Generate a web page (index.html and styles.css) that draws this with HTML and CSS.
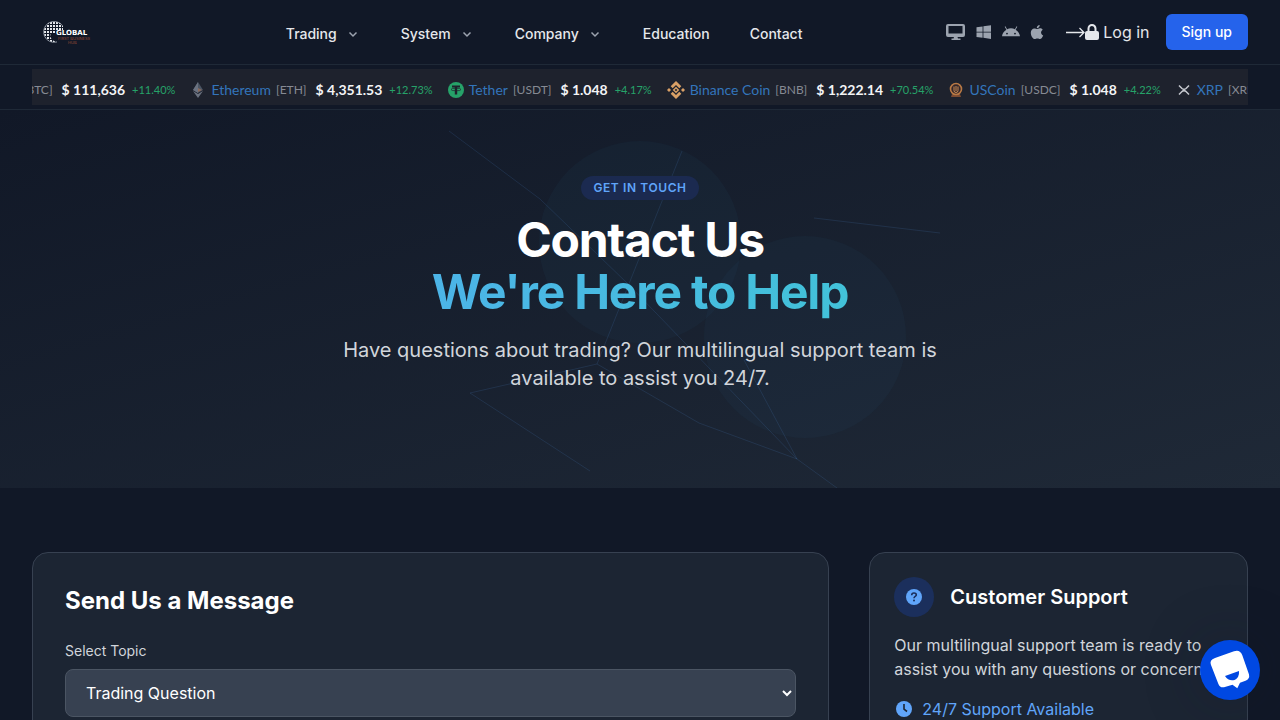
FILE: index.html
```html
<!DOCTYPE html>
<html lang="en">

<head>
    <meta charset="UTF-8">
    <meta name="viewport" content="width=device-width, initial-scale=1">
    <title>Contact Us</title>
    <link rel="stylesheet" href="styles.css">
</head>

<body>
    <header class="header">
        <a href="#" class="logo" aria-label="Global home">
            <svg width="64" height="32" viewBox="0 0 64 32">
                <defs>
                    <pattern id="dots" width="3" height="3" patternUnits="userSpaceOnUse">
                        <rect width="2" height="2" fill="#e5e7eb"/>
                    </pattern>
                </defs>
                <path d="M31 10A10.500 10.500 0 1 0 25 26C19 25 17 20 19 17H24V14H31Z" fill="url(#dots)"/>
                <path d="M30 9A10.500 10.500 0 1 0 25 26" fill="none" stroke="#9ca3af" stroke-width=".8"/>
                <text x="24" y="19" class="logo-name">GLOBAL</text>
                <text x="26" y="24" class="logo-sub">FIRST BUSINESS</text>
                <text x="36" y="28" class="logo-sub">HUB</text>
            </svg>
        </a>

        <nav class="nav">
            <a href="#">Trading <svg class="chevron" viewBox="0 0 16 16"><path d="M4.500 6.500 8 10l3.500-3.500"/></svg></a>
            <a href="#">System <svg class="chevron" viewBox="0 0 16 16"><path d="M4.500 6.500 8 10l3.500-3.500"/></svg></a>
            <a href="#">Company <svg class="chevron" viewBox="0 0 16 16"><path d="M4.500 6.500 8 10l3.500-3.500"/></svg></a>
            <a href="#">Education</a>
            <a href="#">Contact</a>
        </nav>

        <div class="actions">
            <div class="platforms">
                <a href="#" aria-label="Desktop"><svg width="20" height="16" viewBox="0 0 20 16"><path fill-rule="evenodd" d="M2 0h15a2 2 0 0 1 2 2v9a2 2 0 0 1-2 2h-5.500l.5 1.500h2.500V16h-9v-1.500H7.500L8 13H2a2 2 0 0 1-2-2V2a2 2 0 0 1 2-2zm.500 2v7.500h14V2z"/></svg></a>
                <a href="#" aria-label="Windows"><svg width="16" height="16" viewBox="0 0 16 16"><path d="M.5 3.200 6.600 2.400v5.300H.5zM7.400 2.300 15 1.200v6.500H7.400zM.5 8.400h6.100v5.300L.5 12.900zM7.400 8.400H15v6.500l-7.600-1.100z"/></svg></a>
                <a href="#" aria-label="Android"><svg width="18" height="16" viewBox="0 0 18 16"><path fill-rule="evenodd" d="m3.400 2.300 1.700 3A8.500 8.500 0 0 1 9 4.300c1.400 0 2.700.3 3.900 1l1.700-3 .7.400-1.700 3C16 7.200 17.700 9.500 18 12.300H0c.3-2.800 2-5.100 4.400-6.600l-1.700-3zM5 8.700a.9.900 0 1 0 0 1.800.9.900 0 0 0 0-1.800zm8 0a.9.900 0 1 0 0 1.800.9.900 0 0 0 0-1.800z"/></svg></a>
                <a href="#" aria-label="Apple"><svg width="14" height="16" viewBox="0 0 14 16"><path d="M9.700 1c.1 1.600-1.200 3.200-2.900 3.200C6.600 2.600 8.100 1.100 9.700 1zM7 5.100c.7 0 1.600-.8 3-.8 1 0 2 .5 2.700 1.400-2.400 1.500-2 4.700.5 5.700-.8 1.900-1.800 3.600-3.200 3.600-.9 0-1.400-.6-2.600-.6s-1.700.6-2.600.6C2.700 15 .8 11.600.8 8.700c0-2.700 1.700-4.300 3.500-4.300 1.200 0 2 .7 2.700.7z"/></svg></a>
            </div>
            <a href="#" class="login">
                <svg width="19" height="16" viewBox="0 0 19 16"><path d="M0 8.500h18M13.500 4 18 8.500 13.500 13" fill="none" stroke="currentColor" stroke-width="1.300"/></svg>
                <svg width="14" height="16" viewBox="0 0 14 16"><path fill="currentColor" fill-rule="evenodd" d="M2.500 7V4.500a4.500 4.500 0 0 1 9 0V7H12a2 2 0 0 1 2 2v5a2 2 0 0 1-2 2H2a2 2 0 0 1-2-2V9a2 2 0 0 1 2-2zm2 0h5V4.500a2.500 2.500 0 0 0-5 0z"/></svg>
                <span>Log in</span>
            </a>
            <button type="button" class="btn-signup">Sign up</button>
        </div>
    </header>

    <div class="ticker">
        <div class="ticker-window">
            <ul class="ticker-track">
                <li>
                    <a href="#">Bitcoin</a><span class="symbol">[BTC]</span>
                    <span class="price">$ 111,636</span><span class="change">+11.40%</span>
                </li>
                <li>
                    <svg class="coin" viewBox="0 0 16 16"><path fill="#4b5563" d="m8 0 5 8-5 3-5-3z"/><path fill="#6b7280" d="M8 0v11L3 8zM3 9l5 3 5-3-5 7z"/><path fill="#8a6a5c" d="m8 6 4 2-4 2z"/></svg>
                    <a href="#">Ethereum</a><span class="symbol">[ETH]</span>
                    <span class="price">$ 4,351.53</span><span class="change">+12.73%</span>
                </li>
                <li>
                    <svg class="coin" viewBox="0 0 16 16"><circle cx="8" cy="8" r="8" fill="#26a269"/><path fill="#1e222d" d="M4 3.500h8v2H9.200v7H6.800v-7H4z"/><ellipse cx="8" cy="7.500" rx="5" ry="1.300" fill="none" stroke="#1e222d" stroke-width=".7"/></svg>
                    <a href="#">Tether</a><span class="symbol">[USDT]</span>
                    <span class="price">$ 1.048</span><span class="change">+4.17%</span>
                </li>
                <li>
                    <svg class="coin coin-wide" viewBox="0 0 18 18"><path fill="#d9a066" fill-rule="evenodd" d="m9 0 5.300 5.300-2 2L9 4 5.700 7.300l-2-2zM9 18l5.300-5.300-2-2L9 14l-3.300-3.300-2 2zM2 7l2 2-2 2-2-2zM16 7l2 2-2 2-2-2zM9 5.700 12.300 9 9 12.300 5.700 9zm0 2L7.700 9 9 10.300 10.300 9z"/></svg>
                    <a href="#">Binance Coin</a><span class="symbol">[BNB]</span>
                    <span class="price">$ 1,222.14</span><span class="change">+70.54%</span>
                </li>
                <li>
                    <svg class="coin" viewBox="0 0 16 16"><path d="M4 12h8l1 3H3z" fill="#7b4b32"/><circle cx="8" cy="7" r="5.500" fill="#33262a" stroke="#b87945" stroke-width="1.600"/><path d="M6 4.500v4a2 2 0 0 0 4 0v-4M8 4v5" fill="none" stroke="#c98b55"/></svg>
                    <a href="#">USCoin</a><span class="symbol">[USDC]</span>
                    <span class="price">$ 1.048</span><span class="change">+4.22%</span>
                </li>
                <li>
                    <svg class="coin" viewBox="0 0 16 16"><path d="M3 3.500 6 6.500q2 1.800 4 0l3-3M3 12.500l3-3q2-1.800 4 0l3 3" fill="none" stroke="#c5c8ce" stroke-width="1.500"/></svg>
                    <a href="#">XRP</a><span class="symbol">[XRP]</span>
                    <span class="price">$ 2.514</span><span class="change">+3.08%</span>
                </li>
            </ul>
        </div>
    </div>

    <section class="hero">
        <svg class="hero-network" viewBox="0 0 1280 378" preserveAspectRatio="xMidYMid slice" aria-hidden="true">
            <circle cx="640" cy="132" r="101" fill="#38bdf8" fill-opacity=".03"/>
            <circle cx="805" cy="227" r="101" fill="#38bdf8" fill-opacity=".03"/>
            <g fill="none" stroke="#60a5fa" stroke-opacity=".13">
                <path d="M449 21 540 89 627 173 797 349 837 378"/>
                <path d="M682 41 597 254 470 283 590 361"/>
                <path d="M597 254 699 313 797 349 744 250"/>
                <path d="M814 108 940 123"/>
            </g>
        </svg>
        <div class="hero-content">
            <span class="badge">GET IN TOUCH</span>
            <h1>Contact Us<br><span class="gradient-text">We're Here to Help</span></h1>
            <p>Have questions about trading? Our multilingual support team is available to assist you 24/7.</p>
        </div>
    </section>

    <main class="container">
        <section class="card card-form">
            <h2>Send Us a Message</h2>
            <form>
                <label for="topic">Select Topic</label>
                <select id="topic">
                    <option>Trading Question</option>
                    <option>Account Support</option>
                    <option>Technical Support</option>
                </select>
            </form>
        </section>

        <aside class="card card-support">
            <div class="support-head">
                <span class="support-icon">
                    <svg width="16" height="16" viewBox="0 0 16 16"><circle cx="8" cy="8" r="8" fill="#60a5fa"/><path d="M5.700 6.200C5.700 4.800 6.700 4 8 4s2.300.8 2.300 2c0 1.400-2.300 1.500-2.300 3.200" fill="none" stroke="#1b2f5c" stroke-width="1.600"/><circle cx="8" cy="11.600" r="1" fill="#1b2f5c"/></svg>
                </span>
                <h3>Customer Support</h3>
            </div>
            <p>Our multilingual support team is ready to assist you with any questions or concerns.</p>
            <div class="support-hours">
                <svg width="20" height="16" viewBox="0 0 20 16"><circle cx="10" cy="8" r="8" fill="#60a5fa"/><path d="M10 3v5.200l3 2.300" fill="none" stroke="#1c2533" stroke-width="1.600"/></svg>
                <span>24/7 Support Available</span>
            </div>
        </aside>
    </main>

    <button type="button" class="chat-button" aria-label="Open chat">
        <svg width="60" height="60" viewBox="0 0 60 60">
            <path d="M15 18 34 11.300q6-2.200 8.300 4L49 34.500q1 4.500-3.500 6.200l-5.500 2-2.700 5.600-4.800-3.600-8.500 2.500q-4 .800-5.600-3.300L11 25q-2-5 4-7z" fill="#fff"/>
            <path d="M25 36 39 31q.5 6.500-4.500 9-6 1.500-9.500-4z" fill="#0048e2"/>
        </svg>
    </button>
</body>

</html>
```
FILE: styles.css
```css
* {
    box-sizing: border-box;
}

body {
    margin: 0;
    font-family: Inter, sans-serif;
    font-size: 16px;
    line-height: 24px;
    color: #d1d5db;
    background-color: #111827;
}

a {
    color: inherit;
    text-decoration: none;
}

h1,
h2,
h3,
p {
    margin: 0;
}

h1,
h2,
h3 {
    color: #fff;
}

svg {
    display: block;
}

/* Header */
.header {
    display: flex;
    align-items: center;
    justify-content: space-between;
    height: 65px;
    padding: 0 32px;
    border-bottom: 1px solid #1f2937;
}

.logo {
    width: 110px;
}

.logo-name {
    fill: #fff;
    font-family: "DejaVu Sans", sans-serif;
    font-size: 7px;
    font-weight: 700;
}

.logo-sub {
    fill: #9a4a35;
    font-size: 4px;
}

.nav {
    display: flex;
    gap: 40px;
    padding-top: 4px;
    font-size: 14px;
    line-height: 20px;
    font-weight: 500;
    color: #e5e7eb;
}

.nav a {
    display: flex;
    align-items: center;
    gap: 8px;
}

.chevron {
    width: 16px;
    height: 16px;
    fill: none;
    stroke: #9ca3af;
    stroke-width: 1.5;
}

.actions {
    display: flex;
    align-items: center;
    gap: 16px;
}

.platforms {
    display: flex;
    gap: 10px;
    margin-right: 6px;
    fill: #9ca3af;
}

.login {
    display: flex;
    align-items: center;
    color: #e5e7eb;
}

.login span {
    margin-left: 4px;
}

.btn-signup {
    padding: 8px 16px;
    border: none;
    border-radius: 6px;
    background-color: #2563eb;
    color: #fff;
    font-family: inherit;
    font-size: 14px;
    line-height: 20px;
    font-weight: 500;
    cursor: pointer;
}

/* Price ticker */
.ticker {
    padding: 4px 32px;
    border-bottom: 1px solid #1f2937;
}

.ticker-window {
    overflow: hidden;
    background-color: #1e222d;
}

.ticker-track {
    display: flex;
    gap: 15px;
    height: 36px;
    margin: 0 0 0 -57px;
    padding: 6px 0 0;
    list-style: none;
    font-family: Lato, sans-serif;
    font-size: 14px;
    white-space: nowrap;
}

.ticker-track li {
    display: flex;
    align-items: center;
    flex-shrink: 0;
}

.ticker-track a {
    color: #3375bb;
}

.coin {
    width: 16px;
    height: 16px;
    margin-right: 5px;
}

.coin-wide {
    width: 18px;
    height: 18px;
}

.symbol {
    margin-left: 5px;
    font-size: 12px;
    color: #868a93;
}

.price {
    margin-left: 9px;
    font-weight: 700;
    color: #f3f4f6;
}

.change {
    margin-left: 7px;
    font-size: 11px;
    color: #26a269;
}

/* Hero */
.hero {
    position: relative;
    padding: 66px 32px 96px;
    text-align: center;
    background-image: linear-gradient(to bottom right, #111827, #1f2937);
}

.hero-network {
    position: absolute;
    top: 0;
    left: 0;
    width: 100%;
    height: 100%;
}

.hero-content {
    position: relative;
    max-width: 640px;
    margin: 0 auto;
    display: flex;
    flex-direction: column;
    align-items: center;
}

.badge {
    padding: 4px 12px;
    border-radius: 12px;
    background-color: #1b2a50;
    color: #60a5fa;
    font-size: 12px;
    line-height: 16px;
    font-weight: 600;
    letter-spacing: 0.05em;
}

.hero h1 {
    margin: 14px 0 18px;
    font-size: 48px;
    line-height: 52px;
    font-weight: 700;
    letter-spacing: -0.025em;
}

.gradient-text {
    background-image: linear-gradient(to right, #4cb4e7, #42c2d9);
    background-clip: text;
    -webkit-background-clip: text;
    color: transparent;
}

.hero p {
    font-size: 20px;
    line-height: 28px;
}

/* Content */
.container {
    display: grid;
    grid-template-columns: repeat(3, 1fr);
    gap: 40px;
    padding: 64px 32px;
}

.card {
    border: 1px solid #374151;
    border-radius: 16px;
    background-color: #1c2533;
}

.card-form {
    grid-column: span 2;
    padding: 32px;
}

.card-form h2 {
    margin-bottom: 24px;
    font-size: 24px;
    line-height: 32px;
    font-weight: 700;
}

.card-form label {
    display: block;
    margin-bottom: 8px;
    font-size: 14px;
    line-height: 20px;
}

.card-form select {
    width: 100%;
    height: 48px;
    padding: 0 16px;
    border: 1px solid #4b5563;
    border-radius: 8px;
    background-color: #374151;
    color: #fff;
    font-family: inherit;
    font-size: 16px;
}

.card-support {
    padding: 24px;
}

.support-head {
    display: flex;
    align-items: center;
    gap: 16px;
    margin-bottom: 16px;
}

.support-icon {
    display: flex;
    align-items: center;
    justify-content: center;
    width: 40px;
    height: 40px;
    border-radius: 50%;
    background-color: #1b2f5c;
}

.card-support h3 {
    font-size: 20px;
    line-height: 28px;
    font-weight: 600;
}

.support-hours {
    display: flex;
    align-items: center;
    gap: 8px;
    margin-top: 16px;
    color: #60a5fa;
}

/* Chat widget */
.chat-button {
    position: fixed;
    right: 20px;
    bottom: 20px;
    width: 60px;
    height: 60px;
    padding: 0;
    border: none;
    border-radius: 50%;
    background-color: #0048e2;
    box-shadow: 0 0 60px rgba(17, 24, 39, 0.3);
    cursor: pointer;
}
```
